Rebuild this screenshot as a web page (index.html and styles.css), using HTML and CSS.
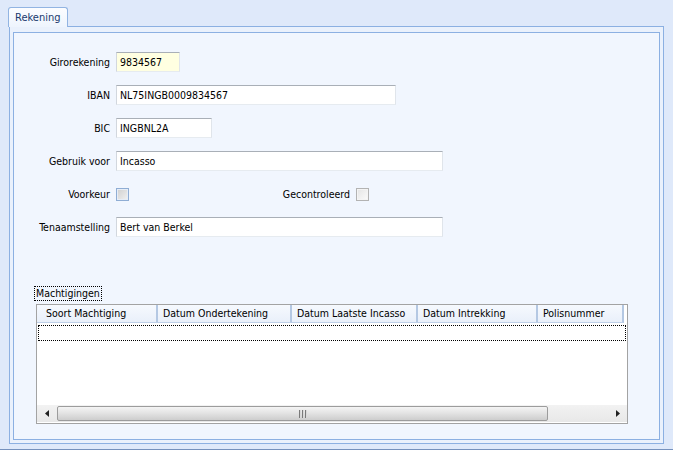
FILE: index.html
```html
<!DOCTYPE html>
<html>
<head>
<meta charset="utf-8">
<link rel="stylesheet" href="styles.css">
</head>
<body>
<div class="window">
  <div class="tabs"><div class="tab">Rekening</div></div>
  <div class="page">
    <div class="inner">
      <div class="form">
        <div class="label">Girorekening</div>
        <div><div class="field w-giro">9834567</div></div>
        <div class="label">IBAN</div>
        <div><div class="field w-iban">NL75INGB0009834567</div></div>
        <div class="label">BIC</div>
        <div><div class="field w-bic">INGBNL2A</div></div>
        <div class="label">Gebruik voor</div>
        <div><div class="field w-wide">Incasso</div></div>
        <div class="label">Voorkeur</div>
        <div class="cbrow">
          <span class="cb cb-hot"></span>
          <span class="label2">Gecontroleerd</span>
          <span class="cb"></span>
        </div>
        <div class="label">Tenaamstelling</div>
        <div><div class="field w-wide">Bert van Berkel</div></div>
      </div>
      <div class="mach">
        <span class="group-label">Machtigingen</span>
        <div class="grid">
          <div class="header">
            <div class="hcell c1">Soort Machtiging</div>
            <div class="hcell c2">Datum Ondertekening</div>
            <div class="hcell c3">Datum Laatste Incasso</div>
            <div class="hcell c4">Datum Intrekking</div>
            <div class="hcell c5">Polisnummer</div>
          </div>
          <div class="row-focus"></div>
          <div class="filler"></div>
          <div class="hscroll">
            <div class="sbtn"><svg width="4" height="7" viewBox="0 0 4 7"><path d="M4 0 L0 3.5 L4 7 Z" fill="#222"/></svg></div>
            <div class="thumb"><svg width="8" height="8" viewBox="0 0 8 8"><rect x="0" y="0" width="2" height="8" fill="#7a7a7a"/><rect x="3" y="0" width="2" height="8" fill="#7a7a7a"/><rect x="6" y="0" width="2" height="8" fill="#7a7a7a"/><rect x="1" y="0" width="1" height="8" fill="#d8d8d8"/><rect x="4" y="0" width="1" height="8" fill="#d8d8d8"/><rect x="7" y="0" width="1" height="8" fill="#d8d8d8"/></svg></div>
            <div class="track"></div>
            <div class="sbtn"><svg width="4" height="7" viewBox="0 0 4 7"><path d="M0 0 L4 3.5 L0 7 Z" fill="#222"/></svg></div>
          </div>
        </div>
      </div>
    </div>
  </div>
</div>
</body>
</html>
```

FILE: styles.css
```css
html, body {
  margin: 0;
  padding: 0;
}
body {
  background: #dfe9fa;
  font-family: "DejaVu Sans Condensed", "Liberation Sans", sans-serif;
  font-size: 10.5px;
  color: #000;
  height: 450px;
  overflow: hidden;
}
.window {
  height: 449px;
  border-bottom: 1px solid #7591bd;
}
.tabs {
  display: flex;
  align-items: flex-start;
  height: 19px;
  padding: 7px 0 0 8px;
}
.tab {
  position: relative;
  z-index: 1;
  box-sizing: border-box;
  width: 60px;
  height: 20px;
  margin-bottom: -1px;
  border: 1px solid #92b4e2;
  border-bottom: none;
  border-radius: 3px 3px 0 0;
  background: linear-gradient(#fcfdff, #eef4fd);
  color: #1a3a6e;
  padding: 1px 0 0 6px;
  line-height: 17px;
  font-size: 11px;
}
.page {
  box-sizing: border-box;
  height: 418px;
  margin: 0 9px;
  border: 1px solid #8cb0e2;
  padding: 5px 3px 3px 3px;
  background: #eaf1fc;
}
.inner {
  box-sizing: border-box;
  height: 100%;
  border: 1px solid #8cb0e2;
  background: #f1f6fe;
  padding-top: 19px;
}
.form {
  display: grid;
  grid-template-columns: 96px auto;
  column-gap: 6px;
  row-gap: 13px;
}
.label {
  text-align: right;
  line-height: 20px;
  height: 20px;
}
.field {
  box-sizing: border-box;
  height: 20px;
  border: 1px solid;
  border-color: #a9afb7 #e0e5eb #e6ebf0 #d2d7de;
  background: #fff;
  padding: 0 3px;
  line-height: 18px;
  white-space: nowrap;
}
.w-giro { width: 64px; background: #ffffe1; }
.w-iban { width: 280px; }
.w-bic { width: 96px; }
.w-wide { width: 327px; }
.cbrow {
  display: flex;
  align-items: center;
  height: 20px;
}
.cb {
  box-sizing: border-box;
  width: 13px;
  height: 13px;
  border: 1px solid #b3b3b3;
  background: linear-gradient(135deg, #e4e4e4, #fbfbfb);
  box-shadow: inset 0 0 0 1px #f4f4f4;
}
.cb-hot {
  border-color: #8fadd4;
  background: linear-gradient(135deg, #cfcfcf, #f2f2f2);
  box-shadow: inset 0 0 0 1px #e6edf7;
}
.label2 {
  width: 221px;
  text-align: right;
  margin-right: 6px;
  line-height: 20px;
}
.mach {
  margin: 49px 0 0 20px;
}
.group-label {
  display: inline-block;
  box-sizing: border-box;
  height: 15px;
  border: 1px dotted #000;
  padding: 0 1px;
  line-height: 13px;
}
.grid {
  box-sizing: border-box;
  width: 592px;
  height: 120px;
  margin: 3px 0 0 2px;
  border: 1px solid #a3a3a3;
  background: #fff;
  display: flex;
  flex-direction: column;
  padding-bottom: 1px;
}
.header {
  display: flex;
  height: 18px;
  flex: none;
}
.hcell {
  box-sizing: border-box;
  height: 18px;
  line-height: 17px;
  padding-left: 5px;
  background: linear-gradient(#f6f9fe, #e9f0fa);
  border-right: 2px solid #b4c8e3;
  border-bottom: 1px solid #bfd0e8;
  white-space: nowrap;
  overflow: hidden;
}
.c1 { width: 121px; padding-left: 9px; }
.c2 { width: 134px; }
.c3 { width: 126px; }
.c4 { width: 120px; }
.c5 { width: 86px; }
.row-focus {
  box-sizing: border-box;
  height: 16px;
  margin: 2px 1px 0 1px;
  border: 1px dotted #000;
  flex: none;
}
.filler {
  flex: 1;
}
.hscroll {
  flex: none;
  display: flex;
  align-items: center;
  height: 17px;
  background: linear-gradient(#f2f2f2, #e8e8e8);
}
.sbtn {
  width: 19px;
  height: 17px;
  display: flex;
  align-items: center;
  justify-content: center;
  flex: none;
}
.thumb {
  box-sizing: border-box;
  width: 491px;
  height: 15px;
  margin-left: 1px;
  border: 1px solid #9c9c9c;
  border-radius: 2px;
  background: linear-gradient(#f4f4f4, #e4e4e4 45%, #cdcdcd);
  display: flex;
  align-items: center;
  justify-content: center;
  flex: none;
}
.track {
  flex: 1;
}
```
